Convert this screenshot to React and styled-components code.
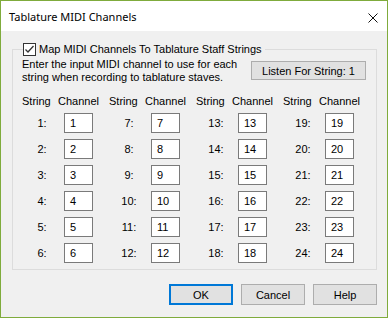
import React from 'react';
import styled, { createGlobalStyle } from 'styled-components';

const GlobalStyle = createGlobalStyle`
	html, body {
		margin: 0;
		padding: 0;
		background: #f0f0f0;
	}
	* {
		box-sizing: border-box;
	}
`;

const FONT = `"Liberation Sans", Arial, sans-serif`;

const rows = [0, 1, 2, 3, 4, 5];
const groups = [0, 1, 2, 3];

class App extends React.Component {
	constructor(props) {
		super(props);
		this.state = { mapped: true };
		this.onToggle = this.onToggle.bind(this);
	}

	onToggle() {
		this.setState({ mapped: !this.state.mapped });
	}

	render() {
		return (
			<Window>
				<GlobalStyle />
				<TitleBar>
					<Title>Tablature MIDI Channels</Title>
					<CloseButton>
						<svg width="10" height="10" viewBox="0 0 10 10">
							<path d="M0.5 0.5 L9.5 9.5 M9.5 0.5 L0.5 9.5" stroke="#111" strokeWidth="1" fill="none" />
						</svg>
					</CloseButton>
				</TitleBar>
				<Body>
					<GroupBox>
						<Legend>
							<CheckLabel onClick={this.onToggle}>
								<CheckBox>
									{this.state.mapped && (
										<svg width="11" height="11" viewBox="0 0 11 11">
											<path d="M1.5 5.5 L4 8 L9.5 2" stroke="#333" strokeWidth="1.3" fill="none" />
										</svg>
									)}
								</CheckBox>
								Map MIDI Channels To Tablature Staff Strings
							</CheckLabel>
						</Legend>
						<IntroRow>
							<Intro>
								Enter the input MIDI channel to use for each
								<br />
								string when recording to tablature staves.
							</Intro>
							<ListenButton>Listen For String: 1</ListenButton>
						</IntroRow>
						<ChannelGrid>
							{groups.map((g) => (
								<React.Fragment key={'h' + g}>
									<HeaderCell>String</HeaderCell>
									<HeaderCell>Channel</HeaderCell>
								</React.Fragment>
							))}
							{rows.map((r) =>
								groups.map((g) => {
									const n = g * 6 + r + 1;
									return (
										<React.Fragment key={n}>
											<StringLabel>{n}:</StringLabel>
											<ChannelInput>{n}</ChannelInput>
										</React.Fragment>
									);
								})
							)}
						</ChannelGrid>
					</GroupBox>
					<ButtonRow>
						<DialogButton $primary>OK</DialogButton>
						<DialogButton>Cancel</DialogButton>
						<DialogButton>Help</DialogButton>
					</ButtonRow>
				</Body>
			</Window>
		);
	}
}

export default App;

const Window = styled.div`
	width: 388px;
	height: 318px;
	border: 1px solid #7fab3c;
	background: #f0f0f0;
	display: flex;
	flex-direction: column;
	font-family: ${FONT};
	font-size: 11px;
	color: #000;
`;

const TitleBar = styled.div`
	height: 30px;
	background: #fff;
	display: flex;
	align-items: center;
	justify-content: space-between;
	padding: 0 9px 0 8px;
`;

const Title = styled.span`
	font-family: "Noto Sans", "Open Sans", sans-serif;
	font-size: 11px;
	color: #000;
	padding-top: 1px;
`;

const CloseButton = styled.span`
	display: flex;
	align-items: center;
	width: 10px;
	height: 10px;
	margin-top: 4px;
`;

const Body = styled.div`
	flex: 1;
	display: flex;
	flex-direction: column;
	padding: 11px 10px 0 11px;
`;

const GroupBox = styled.fieldset`
	margin: 0;
	min-width: 0;
	border: 1px solid #dcdcdc;
	padding: 0 10px 7px 9px;
	height: 228px;
`;

const Legend = styled.legend`
	padding: 0 3px 0 0;
	margin-left: 1px;
	height: 15px;
	line-height: 15px;
`;

const CheckLabel = styled.label`
	display: flex;
	align-items: center;
	gap: 3px;
	cursor: default;
`;

const CheckBox = styled.span`
	width: 13px;
	height: 13px;
	border: 1px solid #333;
	background: #fff;
	display: flex;
	align-items: center;
	justify-content: center;
`;

const IntroRow = styled.div`
	display: flex;
	justify-content: space-between;
	align-items: flex-start;
`;

const Intro = styled.p`
	margin: 0;
	padding-top: 1px;
	line-height: 13px;
`;

const ListenButton = styled.button`
	margin-top: 4px;
	width: 115px;
	height: 19px;
	padding: 0;
	border: 1px solid #adadad;
	background: #e1e1e1;
	font-family: ${FONT};
	font-size: 11px;
	color: #000;
`;

const ChannelGrid = styled.div`
	margin-top: 10px;
	display: grid;
	grid-template-columns: repeat(4, 36px 51px);
	grid-template-rows: 13px repeat(6, 20px);
	row-gap: 6px;
	align-items: center;

	& > :nth-child(-n + 8) {
		margin-bottom: -2px;
	}
`;

const HeaderCell = styled.span`
	line-height: 13px;
	white-space: nowrap;
`;

const StringLabel = styled.span`
	text-align: center;
	padding-left: 4px;
`;

const ChannelInput = styled.span`
	margin-left: 6px;
	width: 29px;
	height: 20px;
	border: 1px solid #7a7a7a;
	background: #fff;
	padding-left: 5px;
	line-height: 18px;
`;

const ButtonRow = styled.div`
	display: flex;
	justify-content: flex-end;
	gap: 8px;
	margin-top: 14px;
`;

const DialogButton = styled.button`
	width: 64px;
	height: 21px;
	padding: 0;
	background: #e1e1e1;
	border: ${(p) => (p.$primary ? '2px solid #0078d7' : '1px solid #adadad')};
	font-family: ${FONT};
	font-size: 11px;
	color: #000;
`;
